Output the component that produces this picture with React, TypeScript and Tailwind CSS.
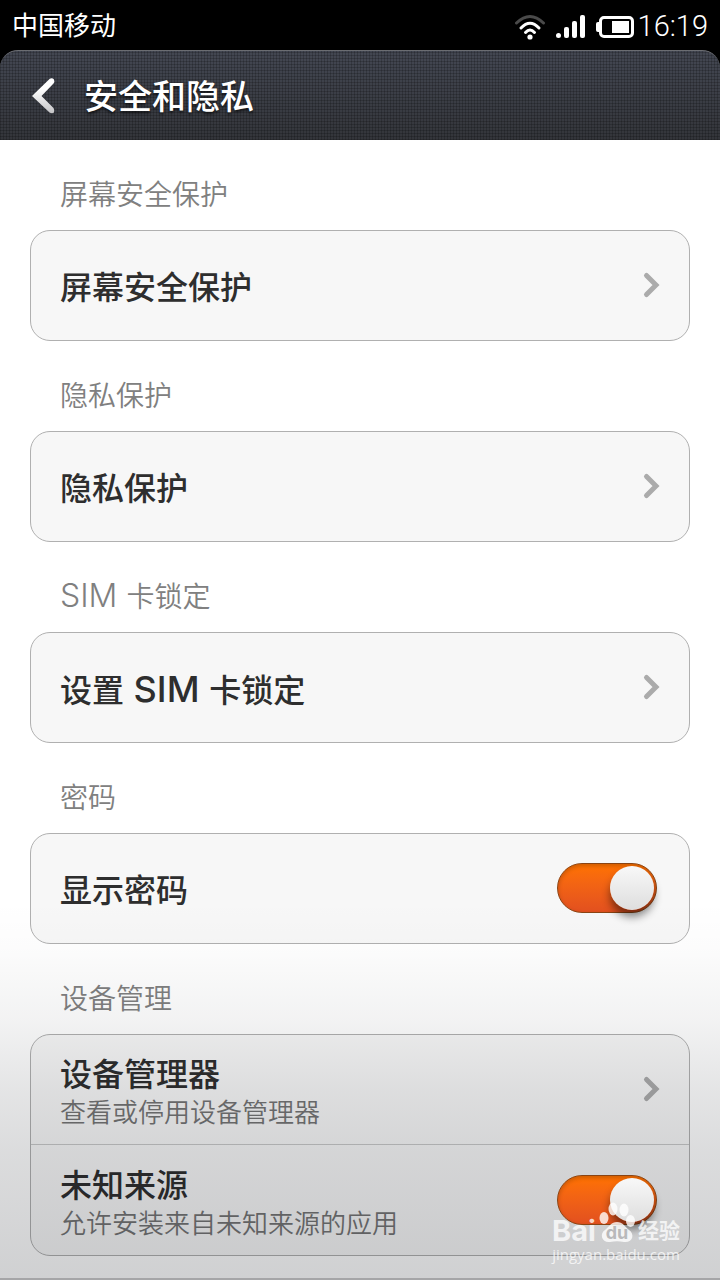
import { useId, type ReactNode } from "react";

const ChevronRight = () => (
  <svg width="20" height="30" viewBox="0 0 20 30" fill="none" className="mr-7 mb-[6px] shrink-0">
    <path d="M5.500 5.500 L15 15 L5.500 24.500" stroke="#ababab" strokeWidth="5" strokeLinecap="round" />
  </svg>
);

const Wifi = () => (
  <svg width="32" height="26" viewBox="0 0 32 26" fill="none" strokeWidth="3" strokeLinecap="round">
    <path d="M2.500 9 Q16 -4 29.500 9" stroke="#4a4a4a" />
    <path d="M7 14 Q16 4.500 25 14" stroke="#fff" />
    <path d="M11.500 18.500 Q16 13.500 20.500 18.500" stroke="#fff" />
    <circle cx="16" cy="23" r="2.600" fill="#fff" />
  </svg>
);

const Signal = () => (
  <svg width="30" height="24" viewBox="0 0 30 24" fill="#fff">
    <circle cx="2.500" cy="20.500" r="2.500" />
    <rect x="8" y="12" width="5" height="11" rx="2" />
    <rect x="16" y="6" width="5" height="17" rx="2" />
    <rect x="24" y="0" width="5" height="23" rx="2" />
  </svg>
);

const Battery = () => (
  <svg width="38" height="22" viewBox="0 0 38 22" fill="#fff">
    <rect x="0" y="6" width="6" height="10" rx="2" />
    <rect x="4.500" y="1.500" width="32" height="19" rx="3.500" fill="none" stroke="#fff" strokeWidth="3" />
    <rect x="16" y="5" width="17" height="12" />
  </svg>
);

const StatusBar = () => (
  <div className="flex h-[50px] items-center justify-between bg-black px-3 pt-1 text-white">
    <span className="pb-1 text-[26px]">中国移动</span>
    <div className="flex items-center">
      <div className="flex items-center gap-[10px]">
        <Wifi />
        <Signal />
        <Battery />
      </div>
      <span className="pl-1 font-[Roboto] text-[29px] font-light">16:19</span>
    </div>
  </div>
);

const Header = () => (
  <div className="bg-black">
    <header className="flex h-[90px] items-center rounded-t-[18px] border-t border-[#6b6d72] bg-[repeating-linear-gradient(0deg,#00000030_0_1px,transparent_1px_3px),repeating-linear-gradient(90deg,#00000030_0_1px,transparent_1px_3px),linear-gradient(#434752,#33353a)]">
      <button aria-label="返回" className="ml-7 flex w-14 items-center">
        <svg width="30" height="40" viewBox="0 0 30 40" fill="none">
          <defs>
            <linearGradient id="back" x1="0" y1="0" x2="0" y2="1">
              <stop offset="0.300" stopColor="#fff" />
              <stop offset="1" stopColor="#c4c4c6" />
            </linearGradient>
          </defs>
          <path d="M21.500 3 Q24 1.500 26 3.500 Q27 6 25.500 7.500 L13.500 20 L25.500 32 Q27 34.500 26 36.500 Q24 38 21.500 36.500 L4 20 Z" fill="url(#back)" />
        </svg>
      </button>
      <h1 className="pt-[2px] text-[34px] font-medium text-white [text-shadow:0_2px_3px_#000000aa]">安全和隐私</h1>
    </header>
  </div>
);

const Section = ({ label, children }: { label: ReactNode; children: ReactNode }) => (
  <section>
    <h2 className="flex h-[90px] items-center px-[30px] pt-5 text-[28px] font-[350] text-[#808080]">
      <span>{label}</span>
    </h2>
    <div className="overflow-hidden rounded-[20px] border border-[#b0b0b0] bg-[#f7f7f7]">{children}</div>
  </section>
);

const RowText = ({ title, summary }: { title: ReactNode; summary?: string }) => (
  <span className="flex flex-1 flex-col items-start text-left">
    <span className="text-[32px] leading-[42px] font-medium text-[#2e2e2e]">{title}</span>
    {summary && <span className="text-[26px] leading-[34px] font-[350] text-[#747474]">{summary}</span>}
  </span>
);

const LinkRow = ({ title, summary }: { title: ReactNode; summary?: string }) => (
  <button className="flex min-h-[109px] w-full items-center pt-1 pl-[29px]">
    <RowText title={title} summary={summary} />
    <ChevronRight />
  </button>
);

const SwitchRow = ({ title, summary, divided }: { title: string; summary?: string; divided?: boolean }) => {
  const id = useId();
  return (
    <label
      htmlFor={id}
      className={`flex w-full items-center pr-8 pl-[29px] ${divided ? "min-h-[111px] border-t border-[#c8c8c8] pt-[6px]" : "min-h-[109px] pt-1"}`}
    >
      <RowText title={title} summary={summary} />
      <input
        id={id}
        type="checkbox"
        role="switch"
        defaultChecked
        className="relative z-20 mb-[6px] h-[50px] w-[100px] shrink-0 appearance-none rounded-full border border-[#8a4413] bg-linear-to-b from-[#ff7200] to-[#e2501f] shadow-[inset_0_2px_4px_#00000033] before:absolute before:top-[2px] before:right-[2px] before:size-[44px] before:rounded-full before:bg-linear-to-b before:from-[#f8f8f8] before:to-[#dedede] before:shadow-[0_7px_8px_#00000077] before:content-['']"
      />
    </label>
  );
};

const Watermark = () => (
  <div className="absolute right-[40px] bottom-[18px] z-30 w-[128px] font-[Inter,'Noto_Sans_CJK_SC',sans-serif] text-white/75">
    <div className="flex h-[32px] items-center justify-between leading-none">
      <span className="text-[29px] font-bold">Bai</span>
      <svg width="36" height="54" viewBox="0 0 36 54" fill="#fff" fillOpacity="0.800" className="mb-5 shrink-0">
        <ellipse cx="5" cy="25" rx="4.500" ry="6" />
        <ellipse cx="14" cy="16" rx="4.500" ry="6.500" />
        <ellipse cx="25" cy="17" rx="4.500" ry="6.500" />
        <ellipse cx="31.500" cy="28" rx="4.500" ry="6" />
        <path d="M18 29 C12 29 11 33 6 37 C0 41 3 50 11 49 C16 48 20 48 25 49 C34 50 36 41 30 37 C25 33 24 29 18 29 Z" />
        <text x="18" y="46" textAnchor="middle" fontSize="18" fontWeight="700" fill="#a9a9ab">du</text>
      </svg>
      <span className="text-[21px] font-bold">经验</span>
    </div>
    <div className="text-center font-['Open_Sans'] text-[15px] leading-[16px]">jingyan.baidu.com</div>
  </div>
);

export default function App() {
  return (
    <div className="relative flex min-h-screen flex-col bg-white font-[Inter,'Noto_Sans_CJK_SC',sans-serif]">
      <StatusBar />
      <Header />
      <main className="px-[30px] pb-6">
        <Section label="屏幕安全保护">
          <LinkRow title="屏幕安全保护" />
        </Section>
        <Section label="隐私保护">
          <LinkRow title="隐私保护" />
        </Section>
        <Section label={<><span className="text-[32px] leading-8 font-light">SIM </span>卡锁定</>}>
          <LinkRow title={<>设置<span className="text-[36px]"> SIM </span>卡锁定</>} />
        </Section>
        <Section label="密码">
          <SwitchRow title="显示密码" />
        </Section>
        <Section label="设备管理">
          <LinkRow title="设备管理器" summary="查看或停用设备管理器" />
          <SwitchRow title="未知来源" summary="允许安装来自未知来源的应用" divided />
        </Section>
      </main>
      <div className="pointer-events-none absolute inset-x-0 bottom-0 z-10 h-[380px] border-b-2 border-[#a5a5a7] bg-[linear-gradient(#04081000,#04081003_12%,#0408100d_32%,#0408101b_50%,#04081024_66%,#04081030)]" />
      <Watermark />
    </div>
  );
}
